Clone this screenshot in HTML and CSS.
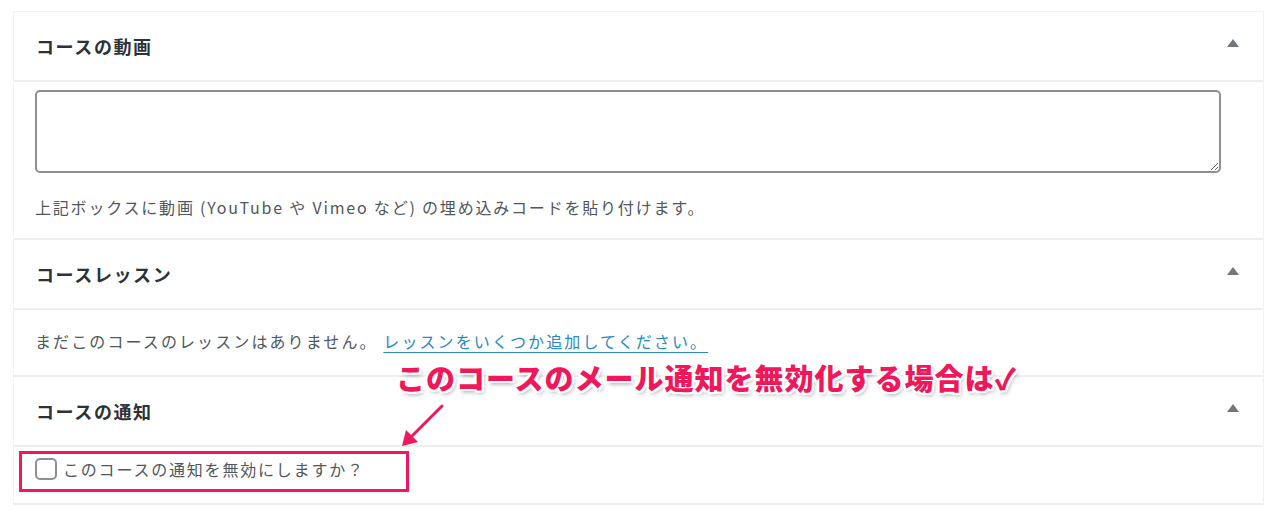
FILE: index.html
```html
<!DOCTYPE html>
<html lang="ja">
  <head>
    <meta charset="UTF-8">
    <meta name="viewport" content="width=device-width, initial-scale=1.0">
    <title>コース設定</title>
    <link rel="stylesheet" href="styles.css">
  </head>
  <body>
    <div class="panel">
      <div class="box">
        <div class="box-head">
          <h2>コースの動画</h2>
          <svg class="toggle" width="12" height="8" viewBox="0 0 12 8"><path d="M6 0 L12 8 L0 8 Z" fill="#72777c"/></svg>
        </div>
        <div class="box-body video">
          <textarea class="embed"></textarea>
          <p class="desc">上記ボックスに動画 (YouTube や Vimeo など) の埋め込みコードを貼り付けます。</p>
        </div>
      </div>

      <div class="box">
        <div class="box-head">
          <h2>コースレッスン</h2>
          <svg class="toggle" width="12" height="8" viewBox="0 0 12 8"><path d="M6 0 L12 8 L0 8 Z" fill="#72777c"/></svg>
        </div>
        <div class="box-body lessons">
          <p class="desc">まだこのコースのレッスンはありません。 <a href="#">レッスンをいくつか追加してください。 </a></p>
        </div>
      </div>

      <div class="box">
        <div class="box-head">
          <h2>コースの通知</h2>
          <svg class="toggle" width="12" height="8" viewBox="0 0 12 8"><path d="M6 0 L12 8 L0 8 Z" fill="#72777c"/></svg>
        </div>
        <div class="box-body notify">
          <label class="check"><span class="checkbox"></span>このコースの通知を無効にしますか？</label>
        </div>
      </div>
    </div>

    <!-- annotation overlay -->
    <div class="note">このコースのメール通知を無効化する場合は✓</div>
    <svg class="arrow" width="60" height="50" viewBox="0 0 60 50">
      <line x1="48" y1="4" x2="16" y2="36" stroke="#f2165b" stroke-width="3" stroke-linecap="round"/>
      <path d="M8 44 L12 28 L24 40 Z" fill="#f2165b"/>
    </svg>
    <div class="highlight"></div>
  </body>
</html>
```

FILE: styles.css
```css
body {
  margin: 0;
  background: #fff;
  font-family: "Noto Sans CJK JP", "Noto Sans", sans-serif;
  color: #50575e;
  position: relative;
  height: 511px;
  overflow: hidden;
}

.panel {
  margin: 11px 16px 0 13px;
  border: 1px solid #f3f3f4;
  border-bottom: none;
  background: #fff;
}

.box {
  border-bottom: 2px solid #eeeeef;
}

.box-head {
  display: flex;
  align-items: center;
  justify-content: space-between;
  height: 68px;
  padding: 0 24px 0 22px;
  border-bottom: 2px solid #eeeeef;
}

.box-head h2 {
  margin: 0;
  font-size: 18px;
  font-weight: 700;
  letter-spacing: 1.6px;
  color: #2c3338;
}

.toggle {
  margin-top: -6px;
}

.box-body {
  padding: 0 42px 0 21px;
}

.video {
  padding-top: 8px;
  padding-bottom: 19px;
}

.embed {
  display: block;
  box-sizing: border-box;
  width: 100%;
  height: 83px;
  margin: 0;
  border: 2px solid #8c8f94;
  border-radius: 5px;
  background: #fff;
}

.desc {
  margin: 0;
  font-size: 16px;
  line-height: 24px;
  letter-spacing: 1.8px;
  color: #50575e;
}

.video .desc {
  margin-top: 22px;
}

.lessons {
  padding-top: 19px;
  padding-bottom: 22px;
}

.lessons .desc {
  letter-spacing: 2.1px;
}

.desc a {
  color: #2a8ac4;
  text-decoration: underline;
  text-underline-offset: 4px;
}

.notify {
  padding-top: 10px;
  padding-bottom: 22px;
}

.check {
  display: flex;
  align-items: center;
  font-size: 16px;
  line-height: 24px;
  letter-spacing: 1.8px;
  color: #50575e;
}

.checkbox {
  width: 18px;
  height: 18px;
  border: 2px solid #8c8f94;
  border-radius: 5px;
  margin: 0 6px 0 0;
  flex: none;
}

.note {
  position: absolute;
  left: 396px;
  top: 357px;
  font-size: 29px;
  font-weight: 900;
  line-height: 40px;
  color: #f2165b;
  letter-spacing: 1px;
  text-shadow:
    2px 0 0 #fff, -2px 0 0 #fff, 0 2px 0 #fff, 0 -2px 0 #fff,
    2px 2px 0 #fff, -2px -2px 0 #fff, 2px -2px 0 #fff, -2px 2px 0 #fff,
    2px 3px 4px rgba(0, 0, 0, 0.35);
}

.arrow {
  position: absolute;
  left: 394px;
  top: 402px;
}

.highlight {
  position: absolute;
  left: 19px;
  top: 451px;
  width: 384px;
  height: 35px;
  border: 3px solid #f2165b;
}
```
